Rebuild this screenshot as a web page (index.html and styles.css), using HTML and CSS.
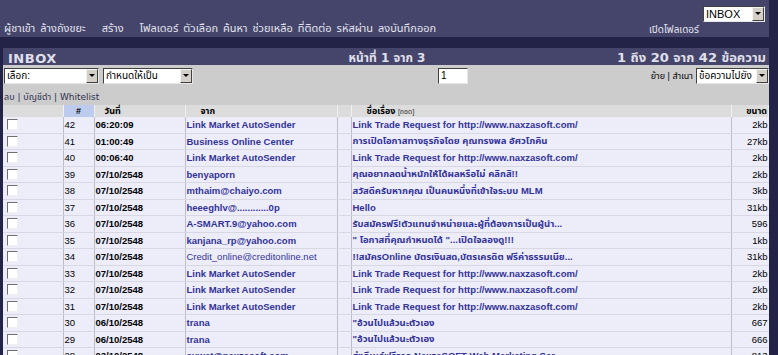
FILE: index.html
```html
<!DOCTYPE html>
<html lang="th">

<head>
    <meta charset="UTF-8">
    <meta name="viewport" content="width=device-width, initial-scale=1.0">
    <title>INBOX</title>
    <link rel="stylesheet" href="styles.css">
</head>

<body>
    <header class="topbar">
        <nav class="menu">
            <a href="#">ผู้ชาเข้า</a>
            <a href="#" class="wide">ล้างถังขยะ</a>
            <a href="#" class="wide">สร้าง</a>
            <a href="#">โฟลเดอร์</a>
            <a href="#">ตัวเลือก</a>
            <a href="#">ค้นหา</a>
            <a href="#">ช่วยเหลือ</a>
            <a href="#">ที่ติดต่อ</a>
            <a href="#">รหัสผ่าน</a>
            <a href="#">ลงบันทึกออก</a>
        </nav>
        <div class="folder">
            <span class="folder-label">เปิดโฟลเดอร์</span>
            <span class="select select-folder"><span class="val">INBOX</span><span class="btn"></span></span>
        </div>
    </header>

    <section class="mailbox">
        <div class="titlebar">
            <span class="title">INBOX</span>
            <span class="pages">หน้าที่ 1 จาก 3</span>
            <span class="count">1 ถึง 20 จาก 42 ข้อความ</span>
        </div>

        <div class="tools">
            <div class="tools-row">
                <span class="select select-pick"><span class="val">เลือก:</span><span class="btn"></span></span>
                <span class="select select-mark"><span class="val">กำหนดให้เป็น</span><span class="btn"></span></span>
                <span class="page-input">1</span>
                <span class="move">ย้าย | สำเนา</span>
                <span class="select select-move"><span class="val">ข้อความไปยัง</span><span class="btn"></span></span>
            </div>
            <div class="links">
                <a href="#">ลบ</a> | <a href="#">บัญชีดำ</a> | <a href="#">Whitelist</a>
            </div>
        </div>

        <table class="messages">
            <colgroup>
                <col class="c-check">
                <col class="c-num">
                <col class="c-date">
                <col class="c-from">
                <col class="c-flag">
                <col class="c-subj">
                <col class="c-size">
            </colgroup>
            <thead>
                <tr>
                    <th></th>
                    <th class="sorted">#</th>
                    <th class="h-date">วันที่</th>
                    <th class="h-from">จาก</th>
                    <th></th>
                    <th class="h-subj">ชื่อเรื่อง <small>[ถอด]</small></th>
                    <th class="h-size">ขนาด</th>
                </tr>
            </thead>
            <tbody id="rows"></tbody>
        </table>
    </section>

    <script>
        const link = 'Link Market AutoSender'
        const trade = 'Link Trade Request for http://www.naxzasoft.com/'
        const messages = [
            [42, '06:20:09', link, trade, '2kb'],
            [41, '01:00:49', 'Business Online Center', 'การเปิดโอกาสทางธุรกิจโดย คุณทรงพล อัศวโภคิน', '27kb'],
            [40, '00:06:40', link, trade, '2kb'],
            [39, '07/10/2548', 'benyaporn', 'คุณอยากลดน้ำหนักให้ได้ผลหรือไม่ คลิกสิ!!', '2kb'],
            [38, '07/10/2548', 'mthaim@chaiyo.com', 'สวัสดีครับหากคุณ เป็นคนหนึ่งที่เข้าใจระบบ MLM', '3kb'],
            [37, '07/10/2548', 'heeeghlv@............0p', 'Hello', '31kb'],
            [36, '07/10/2548', 'A-SMART.9@yahoo.com', 'รับสมัครฟรี!ตัวแทนจำหน่ายและผู้ที่ต้องการเป็นผู้นำ...', '596'],
            [35, '07/10/2548', 'kanjana_rp@yahoo.com', '" โอกาสที่คุณกำหนดได้ "...เปิดใจลองดู!!!', '1kb'],
            [34, '07/10/2548', 'Credit_online@creditonline.net', '!!สมัครOnline บัตรเงินสด,บัตรเครดิต ฟรีค่าธรรมเนีย...', '31kb', true],
            [33, '07/10/2548', link, trade, '2kb'],
            [32, '07/10/2548', link, trade, '2kb'],
            [31, '07/10/2548', link, trade, '2kb'],
            [30, '06/10/2548', 'trana', '"อ้วนไปแล้วนะตัวเอง', '667'],
            [29, '06/10/2548', 'trana', '"อ้วนไปแล้วนะตัวเอง', '666'],
            [28, '03/10/2548', 'suwat@naxzasoft.com', 'ส่งอีเมล์ฟรีจาก NaxzaSOFT Web Marketing Ser...', '813']
        ]

        const rows = document.getElementById('rows')
        for (const m of messages) {
            const tr = document.createElement('tr')
            tr.innerHTML =
                '<td><span class="check"></span></td>' +
                '<td class="num">' + m[0] + '</td>' +
                '<td class="date">' + m[1] + '</td>' +
                '<td class="from' + (m[5] ? ' read' : '') + '"><a href="#">' + m[2] + '</a></td>' +
                '<td></td>' +
                '<td class="subj"><a href="#">' + m[3] + '</a></td>' +
                '<td class="size">' + m[4] + '</td>'
            rows.appendChild(tr)
        }
    </script>
</body>

</html>
```

FILE: styles.css
```css
body {
    margin: 0;
    background-color: #232348;
    font-family: "Liberation Sans", "Noto Sans Thai", "Loma", "Garuda", sans-serif;
    font-size: 9.5px;
    overflow: hidden;
}

a {
    color: inherit;
    text-decoration: none;
}

/* top menu */
.topbar {
    display: flex;
    justify-content: space-between;
    height: 37px;
    margin-right: 9px;
    background-color: #45456b;
    color: #e4e4f0;
}

.menu {
    display: flex;
    align-items: flex-end;
    gap: 5px;
    padding: 0 0 0 4px;
    font-size: 11px;
}

.menu .wide {
    margin-right: 11px;
}

.folder {
    display: flex;
    align-items: flex-start;
    gap: 4px;
    padding: 6px 4px 0 0;
}

.folder-label {
    margin-top: 16px;
    font-size: 10px;
}

/* fake windows selects */
.select {
    display: inline-flex;
    height: 16px;
    box-sizing: border-box;
    background: #fff;
    border: 1px solid;
    border-color: #404040 #e8e8e8 #e8e8e8 #404040;
    color: #000;
    font-size: 10px;
}

.select .val {
    flex: 1;
    padding: 1px 0 0 2px;
    line-height: 12px;
    overflow: hidden;
    white-space: nowrap;
}

.select .btn {
    position: relative;
    width: 12px;
    background: #d4d0c8;
    border: 1px solid;
    border-color: #f4f4f4 #404040 #404040 #f4f4f4;
    box-sizing: border-box;
}

.select .btn:after {
    content: "";
    position: absolute;
    left: 2px;
    top: 4px;
    border-left: 3px solid transparent;
    border-right: 3px solid transparent;
    border-top: 3px solid #000;
}

.select-folder {
    width: 62px;
    font-size: 11px;
}

.select-pick {
    width: 95px;
}

.select-mark {
    width: 90px;
    margin-left: 4px;
}

.select-move {
    width: 73px;
    margin-left: 3px;
}

/* mailbox */
.mailbox {
    margin: 11px 9px 0 3px;
}

.titlebar {
    display: grid;
    grid-template-columns: 1fr auto 1fr;
    align-items: center;
    height: 17px;
    padding: 0 3px 0 5px;
    background-color: #45456b;
    color: #e0e0ec;
    font-family: "DejaVu Sans", "Noto Sans Thai", "Loma", sans-serif;
    font-weight: bold;
    font-size: 13px;
}

.titlebar .title {
    letter-spacing: 0.5px;
}

.titlebar .pages {
    font-size: 12px;
}

.titlebar .count {
    justify-self: end;
}

.tools {
    background-color: #cccccc;
    padding: 3px 0 0 1px;
    height: 37px;
}

.tools-row {
    display: flex;
    align-items: center;
}

.page-input {
    width: 30px;
    height: 16px;
    box-sizing: border-box;
    margin-left: 245px;
    padding: 1px 2px;
    background: #fff;
    border: 1px solid;
    border-color: #404040 #e8e8e8 #e8e8e8 #404040;
    font-size: 10px;
}

.move {
    margin-left: auto;
    font-size: 9px;
}

.links {
    margin-top: 6px;
    color: #2e2e50;
    font-family: "DejaVu Sans", "Noto Sans Thai", sans-serif;
    font-size: 9px;
}

/* message list */
.messages {
    width: 100%;
    table-layout: fixed;
    border-collapse: collapse;
}

.c-check { width: 60px; }
.c-num { width: 31px; }
.c-date { width: 91px; }
.c-from { width: 152px; }
.c-flag { width: 14px; }
.c-size { width: 37px; }

.messages th {
    height: 12px;
    padding: 0;
    background-color: #dcdcdc;
    border-right: 1px solid #f0f0f0;
    font-size: 9px;
    text-align: left;
    line-height: 11px;
}

.messages th.sorted {
    background-color: #bccbee;
    text-align: center;
}

.messages th small {
    font-weight: normal;
    font-size: 7px;
    color: #333;
}

.h-date { padding-left: 10px !important; }
.h-from { padding-left: 15px !important; }
.h-subj { padding-left: 15px !important; }
.h-size { text-align: right !important; padding-right: 1px !important; }

.messages td {
    height: 15.5px;
    padding: 0 0 0 1px;
    background-color: #ededfa;
    border-right: 1px solid #bdbdc8;
    border-bottom: 1px solid #d8d8e4;
    white-space: nowrap;
    overflow: hidden;
    color: #000;
}

.messages td:last-child {
    border-right: 0;
}

.check {
    display: block;
    width: 9px;
    height: 9px;
    margin-left: 3px;
    background: #fff;
    border: 1px solid;
    border-color: #707070 #f0f0f0 #f0f0f0 #707070;
}

.date,
.from,
.subj {
    font-weight: bold;
}

.from,
.subj {
    color: #333399 !important;
}

.from.read {
    font-weight: normal;
}

.size {
    text-align: right;
    padding-right: 1px !important;
}
```
